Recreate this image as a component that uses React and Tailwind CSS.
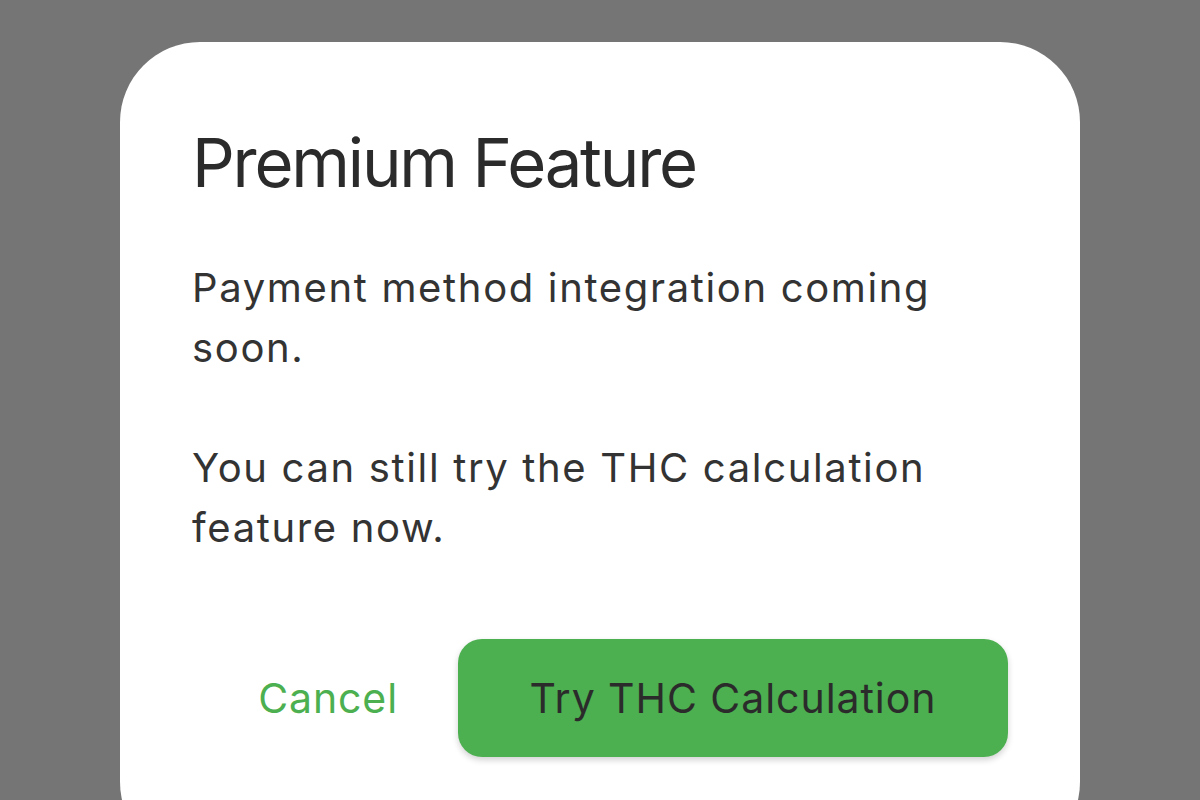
export default function App() {
  return (
    <div
      className="w-[1200px] h-[800px] bg-[#757575] overflow-hidden flex justify-center pt-[42px]"
      style={{ fontFamily: "Inter, 'Noto Sans', sans-serif" }}
    >
      <div className="w-[960px] h-[820px] bg-white rounded-[80px] px-[72px] pt-[81px] flex flex-col">
        <h1 className="text-[67px] leading-[80px] font-normal text-[#2b2b2b] tracking-[-2.2px]">
          Premium Feature
        </h1>
        <p className="mt-[55px] text-[40px] leading-[60px] text-[#333333] tracking-[1.65px] whitespace-pre-line">
          {"Payment method integration coming soon.\n\nYou can still try the THC calculation feature now."}
        </p>
        <div className="mt-[81px] flex items-center justify-end">
          <button className="text-[41px] leading-[50px] text-[#4caf50] tracking-[0.9px] mr-[60px]">
            Cancel
          </button>
          <button className="w-[550px] h-[118px] rounded-[24px] bg-[#4caf50] text-[41px] leading-[50px] text-[#2b2b2b] tracking-[0.95px] shadow-[0_3px_6px_rgba(0,0,0,0.18)] flex items-center justify-center">
            Try THC Calculation
          </button>
        </div>
      </div>
    </div>
  );
}
